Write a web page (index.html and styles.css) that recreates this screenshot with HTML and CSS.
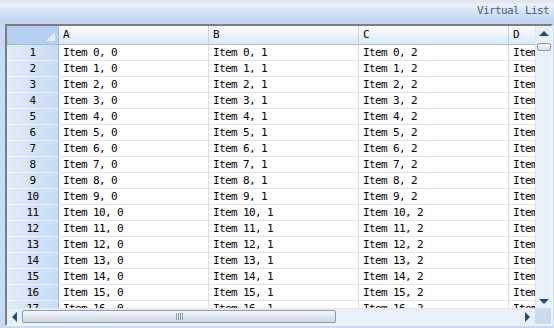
FILE: index.html
```html
<!DOCTYPE html>
<html>
<head>
<meta charset="utf-8">
<link rel="stylesheet" href="styles.css">
</head>
<body>
<div class="titlebar"><span class="title">Virtual List</span></div>
<div class="frame">
  <div class="main">
    <div class="table">
      <div class="row head">
        <div class="rh corner"><span class="tri"></span></div>
        <div class="hc">A</div>
        <div class="hc">B</div>
        <div class="hc">C</div>
        <div class="hc d">D</div>
      </div>
      <div id="rows"></div>
    </div>
    <div class="vscroll">
      <div class="vbtn"><span class="arr up"></span></div>
      <div class="vthumb"></div>
      <div class="vtrack"></div>
      <div class="vbtn"><span class="arr down"></span></div>
    </div>
  </div>
  <div class="bottom">
    <div class="hscroll">
      <div class="hbtn"><span class="arr left"></span></div>
      <div class="hthumb"><span class="grip"></span></div>
      <div class="htrack"></div>
      <div class="hbtn r"><span class="arr right"></span></div>
    </div>
    <div class="sizebox"></div>
  </div>
</div>
<script src="app.js"></script>
</body>
</html>
```

FILE: app.js
```js
var rows = document.getElementById('rows');
var html = '';
for (var i = 0; i < 17; i++) {
  html += '<div class="row"><div class="rh">' + (i + 1) + '</div>' +
    '<div class="c">Item ' + i + ', 0</div>' +
    '<div class="c">Item ' + i + ', 1</div>' +
    '<div class="c">Item ' + i + ', 2</div>' +
    '<div class="c d">Item ' + i + ', 3</div></div>';
}
rows.innerHTML = html;
```

FILE: styles.css
```css
* { box-sizing: border-box; }
html, body {
  margin: 0;
  padding: 0;
}
body {
  width: 554px;
  height: 328px;
  overflow: hidden;
  background: #c8dbf5;
  font-family: "DejaVu Sans Mono", "Liberation Mono", monospace;
  font-size: 11px;
  letter-spacing: -0.62px;
  color: #000;
}
.titlebar {
  height: 22px;
  background: linear-gradient(to bottom, #dde6f1 0px, #dde6f1 3px, #eef4fb 4px, #d9e6f7 10px, #bfd5f3 22px);
  display: flex;
  align-items: center;
  justify-content: flex-end;
  padding-right: 5px;
}
.title {
  color: #4e5e80;
  line-height: 12px;
}
.frame {
  margin: 2px 0 0 5px;
  width: 548px;
  height: 302px;
  border: 2px solid;
  border-color: #7d7d7d #eef4fb #eef4fb #7d7d7d;
  display: flex;
  flex-direction: column;
  background: #fff;
}
.main {
  display: flex;
  height: 282px;
}
.table {
  width: 528px;
  overflow: hidden;
}
.row {
  display: flex;
  height: 16px;
}
.row.head {
  height: 19px;
}
.rh {
  width: 52px;
  flex: none;
  border-right: 1px solid #9dbbe6;
  border-bottom: 1px solid #eef4fc;
  background: linear-gradient(to right, #e2ecf9, #c7dbf4);
  text-align: center;
  line-height: 15px;
}
.rh.corner {
  background: #b7cff0;
  border-bottom: 1px solid #9dbbe6;
  position: relative;
}
.tri {
  position: absolute;
  right: 3px;
  bottom: 3px;
  width: 0;
  height: 0;
  border-left: 9px solid transparent;
  border-bottom: 9px solid #e4edf8;
}
.hc {
  width: 150px;
  flex: none;
  padding-left: 4px;
  line-height: 18px;
  background: linear-gradient(to bottom, #fbfdff, #e9f1fb 60%, #d8e6f7);
  border-right: 1px solid #c3d4ea;
  border-bottom: 1px solid #a9c2e4;
}
.c {
  width: 150px;
  flex: none;
  padding-left: 4px;
  line-height: 15px;
  border-right: 1px solid #dcdcdc;
  border-bottom: 1px solid #e3e3e3;
  white-space: nowrap;
  overflow: hidden;
}
.d {
  width: 26px;
  border-right: none;
}
.vscroll {
  width: 16px;
  flex: none;
  display: flex;
  flex-direction: column;
  background: #eaf0f8;
  border-left: 1px solid #dfe7f2;
}
.vbtn {
  height: 14px;
  flex: none;
  display: flex;
  align-items: center;
  justify-content: center;
}
.vthumb {
  height: 8px;
  margin: 3px 0 0 1px;
  border: 1px solid #8c9bb2;
  border-radius: 2px;
  background: linear-gradient(to bottom, #f6f8fb, #d6dee9);
}
.vtrack { flex: 1; }
.arr {
  width: 0;
  height: 0;
  display: block;
}
.arr.up {
  border-left: 5px solid transparent;
  border-right: 5px solid transparent;
  border-bottom: 5px solid #1f4b8e;
}
.arr.down {
  border-left: 5px solid transparent;
  border-right: 5px solid transparent;
  border-top: 5px solid #1f4b8e;
}
.arr.left {
  border-top: 5px solid transparent;
  border-bottom: 5px solid transparent;
  border-right: 5px solid #1f4b8e;
}
.arr.right {
  border-top: 5px solid transparent;
  border-bottom: 5px solid transparent;
  border-left: 5px solid #1f4b8e;
}
.bottom {
  display: flex;
  height: 16px;
}
.hscroll {
  width: 528px;
  display: flex;
  align-items: center;
  background: #eaf0f8;
  border-top: 1px solid #dfe7f2;
}
.hbtn {
  width: 14px;
  height: 15px;
  flex: none;
  display: flex;
  align-items: center;
  justify-content: center;
}
.hbtn.r { width: 16px; }
.hthumb {
  width: 314px;
  height: 13px;
  margin-left: 1px;
  border: 1px solid #8c9bb2;
  border-radius: 2px;
  background: linear-gradient(to bottom, #f7f9fc, #e2e8f0 50%, #cfd8e4);
  display: flex;
  align-items: center;
  justify-content: center;
}
.grip {
  width: 7px;
  height: 7px;
  background: repeating-linear-gradient(to right, #8e9bb0 0px, #8e9bb0 1px, transparent 1px, transparent 2px);
}
.htrack { flex: 1; }
.sizebox {
  width: 16px;
  background: #c9daf1;
}
```
